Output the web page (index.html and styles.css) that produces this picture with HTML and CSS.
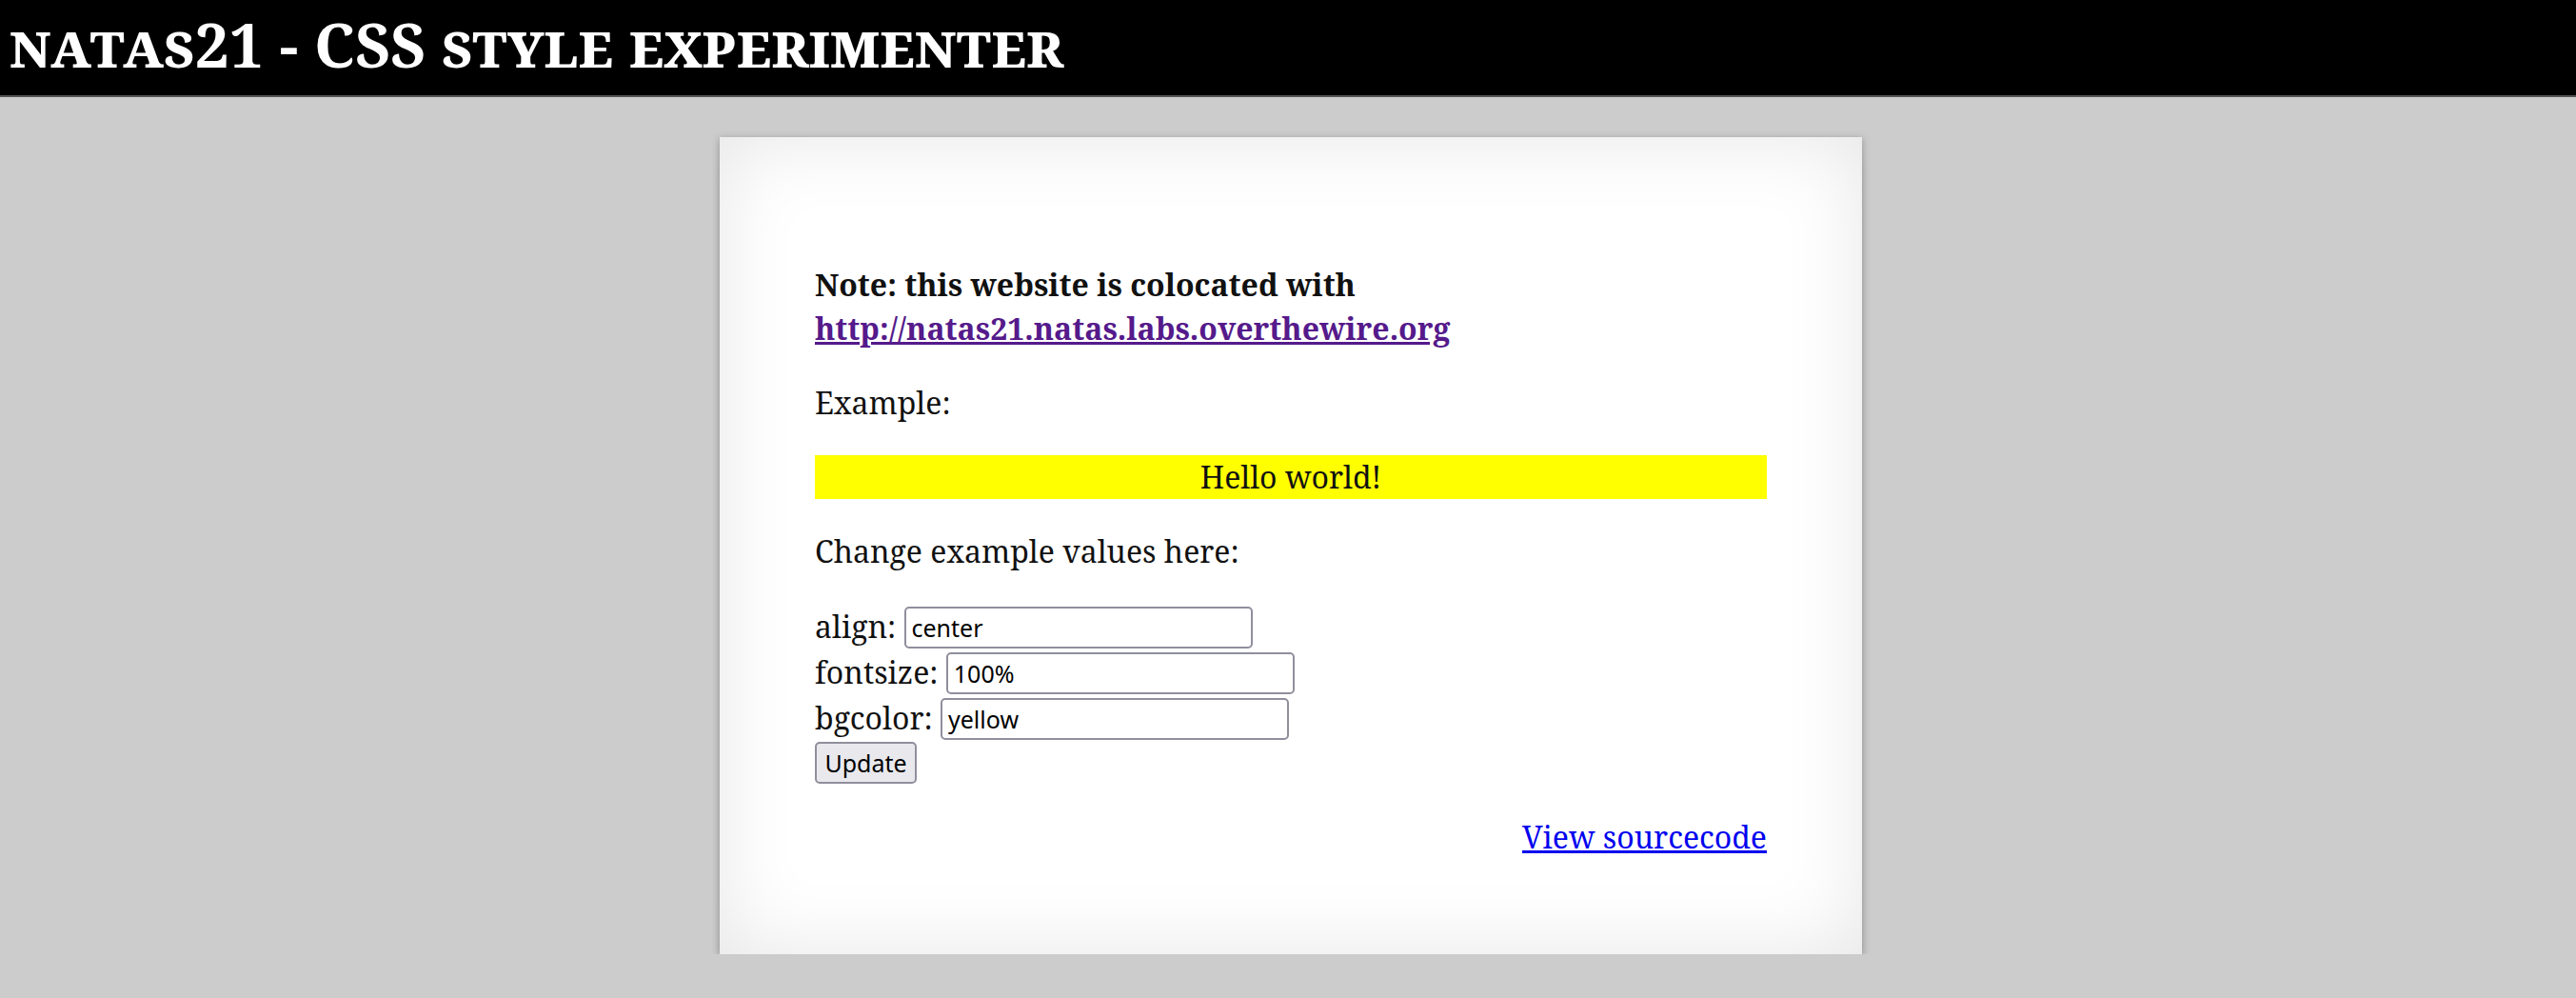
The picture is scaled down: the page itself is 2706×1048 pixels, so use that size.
FILE: index.html
```html
<!DOCTYPE html>
<html lang="en">
<head>
  <meta charset="UTF-8" />
  <title>natas21 - CSS style experimenter</title>
  <link rel="stylesheet" href="styles.css">
</head>
<body>

  <h1 class="banner">natas21 - CSS style experimenter</h1>

  <div class="content">
    <p><b>Note: this website is colocated with <a href="#" class="visited">http://natas21.natas.labs.overthewire.org</a></b></p>

    <p>Example:</p>
    <div class="example">Hello world!</div>

    <p>Change example values here:</p>
    <form class="experiment" action="#" method="POST">
      align: <input name="align" value="center"><br>
      fontsize: <input name="fontsize" value="100%"><br>
      bgcolor: <input name="bgcolor" value="yellow"><br>
      <input type="submit" name="submit" value="Update">
    </form>

    <div class="viewsource"><a href="#">View sourcecode</a></div>
  </div>

</body>
</html>
```

FILE: styles.css
```css
body {
  margin: 0;
  background: #ccc;
  font-family: 'Noto Serif', 'Droid Serif', 'DejaVu Serif', serif;
  font-size: 32px;
  line-height: 46px;
  color: #111;
}

.banner {
  margin: 0;
  padding: 1px 10px 7px;
  background: #000;
  color: #fff;
  font-size: 2em;
  line-height: 92px;
  font-variant: small-caps;
  border-bottom: 2px solid #555;
}

/* white sheet with soft inner glow and a lifted bottom shadow */
.content {
  width: 1000px;
  margin: 42px 0 0 calc(50% - 597px);
  padding: 100px;
  background: #fff;
  box-shadow: 0 18px 16px -12px rgba(0, 0, 0, 0.35),
              0 2px 8px rgba(0, 0, 0, 0.3),
              0 0 84px rgba(0, 0, 0, 0.1) inset;
}

.content p {
  margin: 1em 0;
}

a {
  color: #0000ee;
}

a.visited {
  color: #551a8b;
}

.example {
  background: yellow;
  text-align: center;
  font-size: 100%;
}

.experiment {
  margin: 0;
  line-height: 48px;
}

.experiment input {
  box-sizing: border-box;
  width: 366px;
  height: 44px;
  margin: 3px 0 0;
  padding: 2px 6px;
  border: 2px solid #8f8f9d;
  border-radius: 5px;
  font-family: 'Noto Sans', sans-serif;
  font-size: 25px;
  color: #000;
  vertical-align: top;
}

.experiment input[type="submit"] {
  width: 107px;
  margin-top: 1px;
  background: #e9e9ed;
  padding: 0 8px;
}

.viewsource {
  margin-top: 30px;
  text-align: right;
}
```
